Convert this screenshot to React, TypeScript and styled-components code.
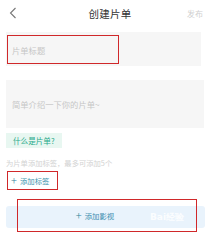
import React from "react";
import styled, { createGlobalStyle } from "styled-components";

const Global = createGlobalStyle`
  html, body { margin: 0; padding: 0; background: #fff; }
  body { font-family: "Noto Sans CJK SC", "Noto Sans", sans-serif; }
`;

export default function App() {
  return (
    <Page>
      <Global />
      <Header>
        <Back>
          <svg width="8" height="12" viewBox="0 0 8 12">
            <path d="M6.5 1 L1.5 6 L6.5 11" fill="none" stroke="#777" strokeWidth="1.1" />
          </svg>
        </Back>
        <Title>创建片单</Title>
        <Publish>发布</Publish>
      </Header>

      <TitleField>
        <Marked>
          <Placeholder>片单标题</Placeholder>
        </Marked>
      </TitleField>

      <DescField>
        <Placeholder>简单介绍一下你的片单~</Placeholder>
      </DescField>

      <Chip>什么是片单?</Chip>

      <Hint>为片单添加标签，最多可添加5个</Hint>

      <TagButton>
        <Plus>+</Plus>添加标签
      </TagButton>

      <FilmArea>
        <FilmButton>
          <Plus>+</Plus>添加影视
        </FilmButton>
        <Watermark>Bai经验</Watermark>
      </FilmArea>
    </Page>
  );
}

const Page = styled.div`
  width: 211px;
  height: 239px;
  overflow: hidden;
  padding: 0 6px;
  box-sizing: border-box;
  display: flex;
  flex-direction: column;
`;

const Header = styled.div`
  height: 26px;
  display: flex;
  align-items: center;
  justify-content: space-between;
`;

const Back = styled.div`
  width: 16px;
  padding-left: 3px;
  display: flex;
  align-items: center;
`;

const Title = styled.div`
  font-size: 10.5px;
  color: #333;
  letter-spacing: 0.2px;
  margin-left: 8px;
`;

const Publish = styled.div`
  font-size: 8px;
  color: #cfcfcf;
  padding-right: 2px;
`;

const TitleField = styled.div`
  margin-top: 6px;
  height: 34px;
  width: 195px;
  background: #f6f6f6;
  box-sizing: border-box;
  padding: 3px 0 2px 1px;
`;

const Marked = styled.div`
  width: 112px;
  height: 29px;
  border: 1.5px solid #d0282a;
  box-sizing: border-box;
  display: flex;
  align-items: center;
  padding-left: 4px;
`;

const Placeholder = styled.span`
  font-size: 8.3px;
  color: #c6c6c6;
`;

const DescField = styled.div`
  margin-top: 14px;
  height: 48px;
  width: 198px;
  background: #f6f6f6;
  display: flex;
  align-items: center;
  padding-left: 6px;
  box-sizing: border-box;
`;

const Chip = styled.div`
  margin-top: 5px;
  align-self: flex-start;
  height: 15px;
  padding: 0 7px;
  background: #e8f7f1;
  color: #27a98a;
  font-size: 7.6px;
  display: flex;
  align-items: center;
`;

const Hint = styled.div`
  margin-top: 10px;
  font-size: 7.3px;
  color: #d2d2d2;
  line-height: 10px;
`;

const TagButton = styled.div`
  margin-top: 3px;
  align-self: flex-start;
  margin-left: 1px;
  height: 19px;
  width: 51px;
  box-sizing: border-box;
  border: 1.5px solid #d0282a;
  display: flex;
  align-items: center;
  padding-left: 3px;
  font-size: 7.4px;
  color: #3d95ad;
`;

const Plus = styled.span`
  font-size: 11px;
  font-weight: 300;
  margin-right: 3px;
  color: #2f7f9a;
  line-height: 1;
`;

const FilmArea = styled.div`
  margin-top: 16px;
  height: 22px;
  width: 199px;
  background: #e9f3fc;
  border-radius: 3px;
  position: relative;
  display: flex;
  justify-content: center;
`;

const FilmButton = styled.div`
  position: absolute;
  left: 11px;
  top: -7px;
  width: 180px;
  height: 33px;
  box-sizing: border-box;
  border: 1.5px solid #d0282a;
  display: flex;
  align-items: center;
  justify-content: center;
  font-size: 7.4px;
  color: #3d8fb0;
  padding-right: 24px;
`;

const Watermark = styled.div`
  position: absolute;
  left: 144px;
  top: 5px;
  font-size: 9px;
  color: rgba(255, 255, 255, 0.85);
  font-family: "DejaVu Sans", sans-serif;
  font-weight: bold;
`;
